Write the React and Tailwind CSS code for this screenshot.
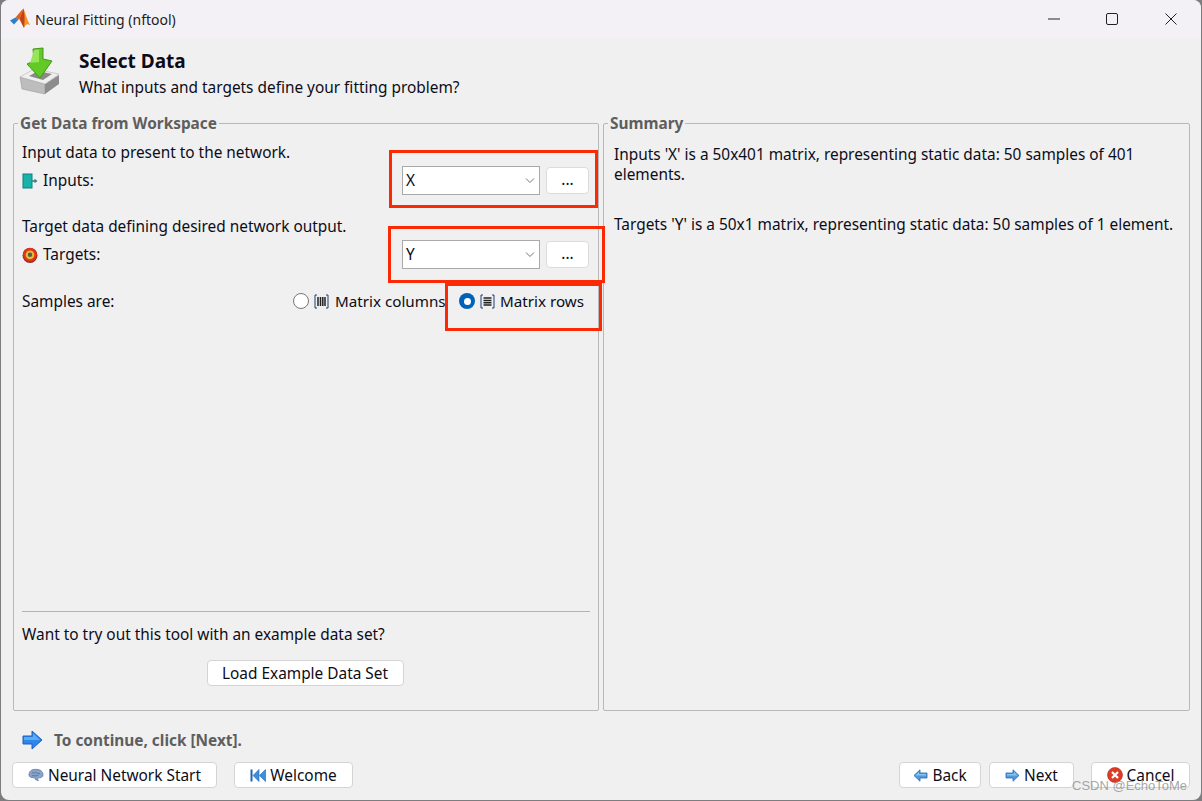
const font = { fontFamily: '"Noto Sans", sans-serif' }

function MatlabLogo() {
  return (
    <svg width="22" height="22" viewBox="0 0 22 22">
      <path d="M1 12.5 L6.5 9.5 L9.5 11.5 L5 16.5 Z" fill="#2f7fc8" />
      <path d="M6.5 9.5 L12.5 2.5 L14.5 0.5 L10.5 11 L9.5 11.5 Z" fill="#d9621e" />
      <path d="M14.5 0.5 C16.5 5 18 12 21.5 17.5 C18.5 15 16.5 16.5 15 20 C13 16 11.5 13 10.5 11 Z" fill="#f0962e" />
      <path d="M14.5 0.5 C15.5 6 16 12 15 20 C13 16 11.5 13 10.5 11 Z" fill="#c4421a" />
    </svg>
  )
}

function DataIcon() {
  return (
    <svg width="42" height="50" viewBox="0 0 42 50">
      <path d="M1 30 L26 37 L26 47 L3 42 Z" fill="#bdbdbd" stroke="#8f8f8f" strokeWidth="0.5" />
      <path d="M26 37 L40 28 L40 37 L26 47 Z" fill="#8c8c8c" />
      <path d="M1 30 L15 22 L40 27 L26 37 Z" fill="#efefef" stroke="#a8a8a8" strokeWidth="0.5" />
      <path d="M10 29 L19 24 L33 27 L24 33 Z" fill="#8a8a8a" />
      <path d="M14 2 L24 1 L24 12 L33 14 L21 31 L8 17 L15 14 Z" fill="#62c926" stroke="#3f9a14" strokeWidth="1" />
      <path d="M15 3 L20 2.5 L20 15 L11 16 Z" fill="#96e55a" />
    </svg>
  )
}

function InputIcon() {
  return (
    <svg width="16" height="16" viewBox="0 0 16 16">
      <rect x="1" y="1" width="9" height="14" fill="#18b2ab" stroke="#0f7f80" />
      <path d="M10 8 H13" stroke="#2f7f7f" strokeWidth="1.5" />
      <path d="M12.5 5.8 L15.5 8 L12.5 10.2 Z" fill="#2f7f7f" />
    </svg>
  )
}

function TargetIcon() {
  return (
    <svg width="16" height="16" viewBox="0 0 16 16">
      <circle cx="8" cy="8.4" r="7.5" fill="#8a2a1c" />
      <circle cx="8" cy="7.8" r="7" fill="#e0321c" />
      <circle cx="8" cy="7.8" r="4.4" fill="#e5bd2c" />
      <circle cx="8" cy="7.8" r="2.2" fill="#5a5a50" />
    </svg>
  )
}

function MatrixColumnsIcon() {
  return (
    <svg width="15" height="15" viewBox="0 0 15 15" fill="none">
      <path d="M3 1 H1 V14 H3 M12 1 H14 V14 H12" stroke="#1c3f78" />
      <path d="M4 3 V12 M6.5 3 V12 M8.8 3 V12 M11 3 V12" stroke="#222" strokeWidth="1.5" />
    </svg>
  )
}

function MatrixRowsIcon() {
  return (
    <svg width="15" height="15" viewBox="0 0 15 15" fill="none">
      <path d="M3 1 H1 V14 H3 M12 1 H14 V14 H12" stroke="#1c3f78" />
      <path d="M3.5 4 H11.5 M3.5 6.5 H11.5 M3.5 8.8 H11.5 M3.5 11 H11.5" stroke="#222" strokeWidth="1.5" />
    </svg>
  )
}

function BigArrowIcon() {
  return (
    <svg width="21" height="20" viewBox="0 0 21 20">
      <path d="M1 6 H10 V1 L20 10 L10 19 V14 H1 Z" fill="#2f86ea" stroke="#1c5fc0" />
      <path d="M2 7 H11 V3.5 L18 10 H2 Z" fill="#5cabf5" />
    </svg>
  )
}

function BrainIcon() {
  return (
    <svg width="16" height="14" viewBox="0 0 17 14">
      <path d="M1 7 C1 3 4 1 8 1 C13 1 16 3 16 7 C16 9 14 10 12 10 L10 10 L11 13 L8 12 L7 10 C3 10 1 9 1 7 Z" fill="#8aa4cc" stroke="#54709c" strokeWidth="0.7" />
      <path d="M4 5 C5 4 6 6 8 4 C9 6 11 4 13 6 M4 8 C6 7 8 9 11 7" stroke="#3f5a86" strokeWidth="0.7" fill="none" />
    </svg>
  )
}

function RewindIcon() {
  return (
    <svg width="16" height="13" viewBox="0 0 16 13">
      <rect x="0.5" y="0.5" width="2" height="12" fill="#1f63b5" />
      <path d="M9 0.5 V12.5 L3 6.5 Z" fill="#3c8fdc" stroke="#1f63b5" strokeWidth="0.6" />
      <path d="M15.5 0.5 V12.5 L9.5 6.5 Z" fill="#3c8fdc" stroke="#1f63b5" strokeWidth="0.6" />
    </svg>
  )
}

function BackIcon() {
  return (
    <svg width="15" height="13" viewBox="0 0 15 13">
      <path d="M14 4 H7 V0.8 L1 6.5 L7 12.2 V9 H14 Z" fill="#4d9be0" stroke="#2a6bb0" strokeWidth="0.8" />
      <path d="M13 5 H6 V3 L2.5 6.5 H13 Z" fill="#8cc4f0" />
    </svg>
  )
}

function NextIcon() {
  return (
    <svg width="15" height="13" viewBox="0 0 15 13">
      <path d="M1 4 H8 V0.8 L14 6.5 L8 12.2 V9 H1 Z" fill="#4d9be0" stroke="#2a6bb0" strokeWidth="0.8" />
      <path d="M2 5 H9 V3 L12.5 6.5 H2 Z" fill="#8cc4f0" />
    </svg>
  )
}

function CancelIcon() {
  return (
    <svg width="16" height="16" viewBox="0 0 16 16">
      <circle cx="8" cy="8" r="7.5" fill="#dd3b26" stroke="#b32a18" strokeWidth="0.6" />
      <path d="M5 5 L11 11 M11 5 L5 11" stroke="#fff" strokeWidth="2.2" />
    </svg>
  )
}

function ComboRow({ label, icon, value }) {
  return (
    <div className="flex items-center h-[29px]">
      <div className="w-[16px] flex justify-start shrink-0">{icon}</div>
      <span className="ml-[5px] w-[359px] shrink-0">{label}</span>
      <div className="w-[138px] h-[29px] shrink-0 bg-white border border-[#a9a9a9] flex items-center justify-between pl-[3px] pr-[3px]">
        <span>{value}</span>
        <svg width="12" height="8" viewBox="0 0 12 8" fill="none">
          <path d="M2 1.5 L6 5.5 L10 1.5" stroke="#777" />
        </svg>
      </div>
      <button className="ml-[6px] w-[43px] h-[27px] bg-white border border-[#dcdcdc] rounded-[4px] leading-none pb-[1px]">...</button>
    </div>
  )
}

function FooterButton({ width, icon, children }) {
  return (
    <button className={`${width} h-[26px] bg-white border border-[#d4d4d4] rounded-[4px] flex items-center justify-center gap-[4px] text-[15.4px]`}>
      {icon}
      <span className="pt-[1px]">{children}</span>
    </button>
  )
}

export default function App() {
  return (
    <div style={font} className="relative w-[1202px] h-[801px] overflow-hidden bg-[#7d7d80] text-[15.4px] leading-[20px] text-[#0c0c18] pl-[1px] pr-[1px] pb-[1px]">
      {/* Window */}
      <div className="w-[1200px] h-[800px] bg-[#f0f0f0] rounded-[8px] overflow-hidden flex flex-col">
        {/* Title bar */}
        <div className="h-[38px] shrink-0 bg-[#f3f1f6] flex items-center pl-[8px]">
          <MatlabLogo />
          <span className="ml-[4px] pt-[1px] text-[14px] text-[#1c1c1c]">Neural Fitting (nftool)</span>
          <div className="ml-auto flex items-center">
            <svg width="12" height="2" viewBox="0 0 12 2" className="mr-[46px]"><path d="M0 1 H12" stroke="#222" /></svg>
            <svg width="12" height="12" viewBox="0 0 12 12" className="mr-[47px]"><rect x="0.5" y="0.5" width="11" height="11" rx="1.5" fill="none" stroke="#222" /></svg>
            <svg width="12" height="12" viewBox="0 0 12 12" className="mr-[24px]"><path d="M0.5 0.5 L11.5 11.5 M11.5 0.5 L0.5 11.5" stroke="#222" /></svg>
          </div>
        </div>

        {/* Header */}
        <div className="h-[74px] shrink-0 flex pl-[18px] pt-[9px]">
          <DataIcon />
          <div className="ml-[18px]">
            <div className="text-[19px] leading-[24px] font-bold mt-[2px]">Select Data</div>
            <div className="mt-[5px]">What inputs and targets define your fitting problem?</div>
          </div>
        </div>

        {/* Panels */}
        <div className="flex gap-[4px] pl-[12px] h-[599px] shrink-0">
          <fieldset className="w-[586px] border border-[#b8b8b8] rounded-[2px] px-[8px] flex flex-col">
            <legend className="-ml-[4px] px-[2px] pt-[2px] font-bold text-[#5e5e5e] leading-[20px]">Get Data from Workspace</legend>
            <div className="mt-[9px]">Input data to present to the network.</div>
            <div className="mt-[3px]"><ComboRow label="Inputs:" icon={<InputIcon />} value="X" /></div>
            <div className="mt-[22px]">Target data defining desired network output.</div>
            <div className="mt-[3px]"><ComboRow label="Targets:" icon={<TargetIcon />} value="Y" /></div>
            <div className="mt-[22px] flex items-center h-[20px]">
              <span className="w-[271px] shrink-0 pt-[1px]">Samples are:</span>
              <span className="w-[16px] h-[16px] rounded-full border border-[#777] bg-white shrink-0" />
              <span className="ml-[5px] shrink-0"><MatrixColumnsIcon /></span>
              <span className="ml-[6px] w-[124px] shrink-0 whitespace-nowrap text-[15.2px]">Matrix columns</span>
              <span className="w-[16px] h-[16px] rounded-full bg-[#0062b8] shrink-0 flex items-center justify-center">
                <span className="w-[7px] h-[7px] rounded-full bg-white" />
              </span>
              <span className="ml-[5px] shrink-0"><MatrixRowsIcon /></span>
              <span className="ml-[5px] shrink-0 whitespace-nowrap text-[15.2px]">Matrix rows</span>
            </div>
            <div className="mt-auto border-t border-[#b4b4b4] pt-[13px] pb-[24px]">
              <div>Want to try out this tool with an example data set?</div>
              <div className="mt-[15px] flex justify-center pr-[2px]">
                <button className="w-[197px] h-[26px] bg-white border border-[#d4d4d4] rounded-[4px] pt-[1px]">Load Example Data Set</button>
              </div>
            </div>
          </fieldset>
          <fieldset className="w-[587px] border border-[#b8b8b8] rounded-[2px] px-[10px]">
            <legend className="-ml-[6px] px-[2px] pt-[2px] font-bold text-[#5e5e5e] leading-[20px]">Summary</legend>
            <div className="mt-[11px] w-[540px]">Inputs 'X' is a 50x401 matrix, representing static data: 50 samples of 401 elements.</div>
            <div className="mt-[30px]">Targets 'Y' is a 50x1 matrix, representing static data: 50 samples of 1 element.</div>
          </fieldset>
        </div>

        {/* Hint */}
        <div className="flex items-center h-[20px] mt-[19px] pl-[21px] shrink-0">
          <BigArrowIcon />
          <span className="ml-[11px] pt-[1px] font-bold text-[#5e5e5e] text-[15.4px]">To continue, click [Next].</span>
        </div>

        {/* Footer buttons */}
        <div className="flex items-center mt-[12px] pl-[11px] shrink-0">
          <FooterButton width="w-[205px]" icon={<BrainIcon />}>Neural Network Start</FooterButton>
          <div className="ml-[17px]"><FooterButton width="w-[119px]" icon={<RewindIcon />}>Welcome</FooterButton></div>
          <div className="ml-auto flex mr-[11px]">
            <FooterButton width="w-[82px]" icon={<BackIcon />}>Back</FooterButton>
            <div className="ml-[8px]"><FooterButton width="w-[85px]" icon={<NextIcon />}>Next</FooterButton></div>
            <div className="ml-[17px]"><FooterButton width="w-[99px]" icon={<CancelIcon />}>Cancel</FooterButton></div>
          </div>
        </div>
      </div>

      {/* Red annotation boxes */}
      <div className="absolute left-[389px] top-[150px] w-[209px] h-[58px] border-[3px] border-[#fb2a05]" />
      <div className="absolute left-[388px] top-[226px] w-[217px] h-[57px] border-[3px] border-[#fb2a05]" />
      <div className="absolute left-[445px] top-[283px] w-[157px] h-[48px] border-[3px] border-[#fb2a05]" />

      {/* Watermark */}
      <div className="absolute left-[1072px] top-[777px] text-[13px] leading-[18px] text-[#8f8f8f]/80 whitespace-nowrap" style={{ fontFamily: '"Liberation Sans", sans-serif' }}>CSDN @EchoToMe</div>
    </div>
  )
}
